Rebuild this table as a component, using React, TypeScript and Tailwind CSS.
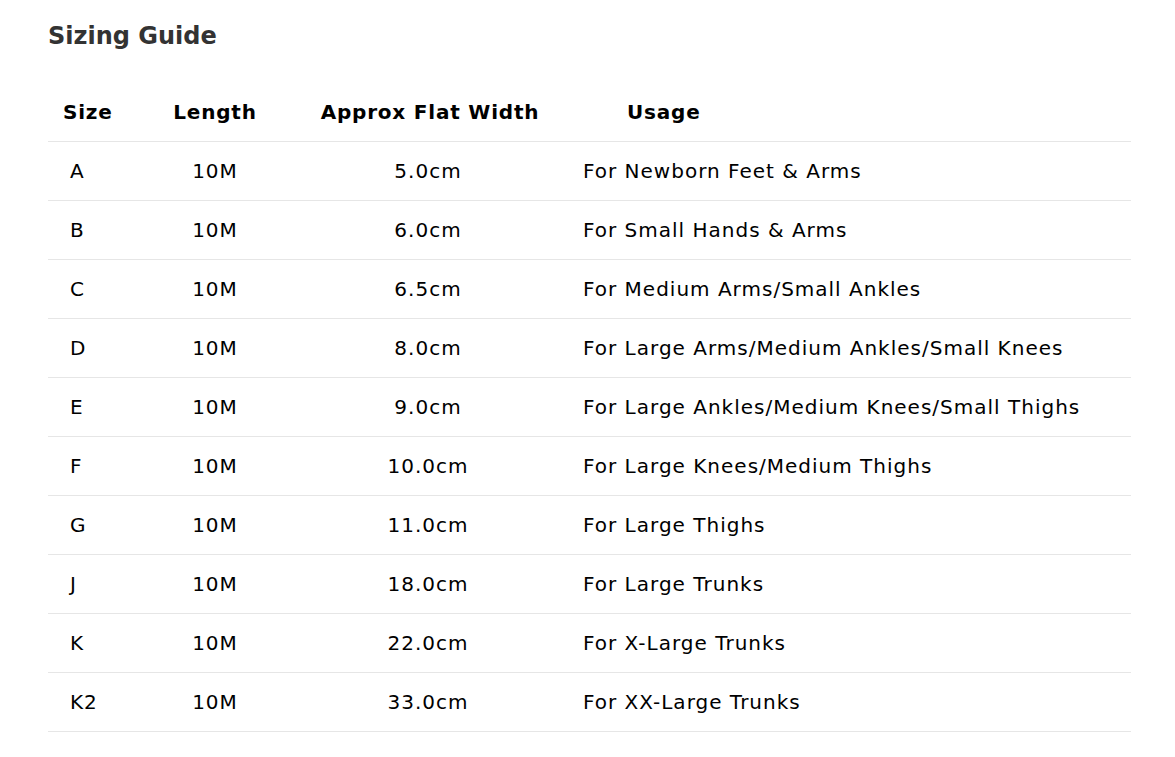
import React from 'react';

// Sizing rows
const sizes = [
  { size: 'A', length: '10M', width: '5.0cm', usage: 'For Newborn Feet & Arms' },
  { size: 'B', length: '10M', width: '6.0cm', usage: 'For Small Hands & Arms' },
  { size: 'C', length: '10M', width: '6.5cm', usage: 'For Medium Arms/Small Ankles' },
  { size: 'D', length: '10M', width: '8.0cm', usage: 'For Large Arms/Medium Ankles/Small Knees' },
  { size: 'E', length: '10M', width: '9.0cm', usage: 'For Large Ankles/Medium Knees/Small Thighs' },
  { size: 'F', length: '10M', width: '10.0cm', usage: 'For Large Knees/Medium Thighs' },
  { size: 'G', length: '10M', width: '11.0cm', usage: 'For Large Thighs' },
  { size: 'J', length: '10M', width: '18.0cm', usage: 'For Large Trunks' },
  { size: 'K', length: '10M', width: '22.0cm', usage: 'For X-Large Trunks' },
  { size: 'K2', length: '10M', width: '33.0cm', usage: 'For XX-Large Trunks' },
];

const font = "font-['Verdana','DejaVu_Sans',sans-serif]";

const App: React.FC = () => {
  return (
    <div className={`min-h-screen bg-white px-12 pt-[18px] ${font}`}>
      <h2 className="text-[24px] leading-9 font-bold text-[#333333]">Sizing Guide</h2>

      <div className="mt-[29px] w-[1083px]">
        {/* Cabeçalho */}
        <div className="grid grid-cols-[102px_130px_300px_1fr] h-[59px] items-center border-b border-[#e6e6e6] text-[20px] tracking-[0.8px] font-bold text-black">
          <div className="pl-[15px]">Size</div>
          <div className="text-center">Length</div>
          <div className="text-center">Approx Flat Width</div>
          <div className="pl-[47px]">Usage</div>
        </div>

        {/* Linhas */}
        {sizes.map((row) => (
          <div
            key={row.size}
            className="grid grid-cols-[102px_130px_300px_1fr] h-[59px] items-center border-b border-[#e6e6e6] text-[20px] tracking-[1px] text-black"
          >
            <div className="pl-[22px]">{row.size}</div>
            <div className="text-center">{row.length}</div>
            <div className="text-center pr-[4px]">{row.width}</div>
            <div className="pl-[3px]">{row.usage}</div>
          </div>
        ))}
      </div>
    </div>
  );
};

export default App;
